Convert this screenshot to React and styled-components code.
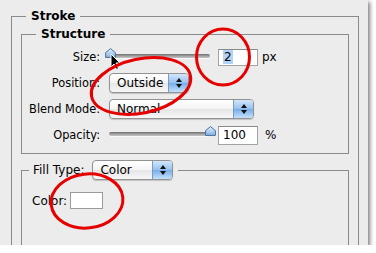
import React from 'react';
import styled, { createGlobalStyle } from 'styled-components';

const Global = createGlobalStyle`
  body {
    margin: 0;
    background: #fff;
    font-family: "DejaVu Sans", Verdana, sans-serif;
    font-size: 12px;
    color: #000;
  }
`;

const Panel = styled.div`
  position: relative;
  width: 368px;
  height: 245px;
  box-sizing: border-box;
  padding: 9px 9px 0 11px;
  background: #ececec;
  box-shadow: 2px 2px 4px rgba(0, 0, 0, 0.5);
  overflow: hidden;
`;

const Group = styled.fieldset`
  margin: ${props => props.mt || 0}px 0 0 0;
  padding: ${props => props.pad};
  border: 1px solid #8a8a8a;
  min-width: 0;
  min-height: ${props => props.minH || 0}px;
`;

const Legend = styled.legend`
  margin-left: ${props => props.ml}px;
  padding: ${props => props.pad || '0 5px'};
  line-height: 14px;
  font-weight: ${props => (props.bold ? 700 : 400)};
  display: flex;
  align-items: center;
  gap: 8px;
`;

const Rows = styled.div`
  display: grid;
  grid-template-columns: 78px 1fr;
  grid-auto-rows: 20px;
  column-gap: 9px;
  row-gap: 6px;
  align-items: center;
`;

const Label = styled.span`
  text-align: right;
  white-space: nowrap;
  font-size: 11.4px;
`;

const Controls = styled.div`
  display: flex;
  align-items: center;
`;

const Track = styled.div`
  position: relative;
  width: 101px;
  height: 4px;
  margin-top: -3px;
  border-radius: 3px;
  background: linear-gradient(#6f6f6f, #a9a9a9 60%, #c4c4c4);
  box-shadow: 0 1px 0 rgba(255, 255, 255, 0.7);
`;

const Thumb = styled.svg`
  position: absolute;
  top: -6px;
  left: ${props => props.at}px;
`;

const Field = styled.div`
  width: 40px;
  height: ${props => props.h}px;
  box-sizing: border-box;
  margin-left: 8px;
  padding-left: 4px;
  display: flex;
  align-items: center;
  background: #fff;
  border: 1px solid #a3a3a3;
  border-top-color: #8a8a8a;
`;

const Selected = styled.span`
  background: #b3d2f7;
  padding: 0 1px;
`;

const Unit = styled.span`
  margin-left: ${props => props.gap}px;
`;

const Select = styled.div`
  width: ${props => props.w}px;
  height: 20px;
  box-sizing: border-box;
  display: flex;
  align-items: center;
  border: 1px solid #929292;
  border-radius: 4px;
  background: linear-gradient(#ffffff, #f4f4f4 48%, #e6e6e6 52%, #f7f7f7);
  box-shadow: 0 1px 1px rgba(0, 0, 0, 0.18);
  overflow: hidden;
  font-weight: 400;
`;

const SelectText = styled.span`
  flex: 1;
  padding-left: 7px;
  white-space: nowrap;
`;

const Stepper = styled.div`
  width: 19px;
  height: 100%;
  display: flex;
  flex-direction: column;
  align-items: center;
  justify-content: center;
  gap: 2px;
  border-left: 1px solid #7b9bc4;
  background: linear-gradient(#d3e6fa, #98c3f0 48%, #78aeea 52%, #c3e1fb);
`;

const Caret = styled.div`
  width: 0;
  height: 0;
  border-left: 3px solid transparent;
  border-right: 3px solid transparent;
  ${props => (props.down ? 'border-top: 4px solid #111;' : 'border-bottom: 4px solid #111;')}
`;

const FillBody = styled.div`
  display: flex;
  align-items: center;
  gap: 3px;
  padding: 12px 0 0 10px;
`;

const Swatch = styled.div`
  width: 33px;
  height: 17px;
  box-sizing: border-box;
  background: #fff;
  border: 1px solid #9a9a9a;
`;

const Overlay = styled.svg`
  position: absolute;
  left: 0;
  top: 0;
  pointer-events: none;
`;

function Dropdown({ w, value }) {
  return (
    <Select w={w}>
      <SelectText>{value}</SelectText>
      <Stepper>
        <Caret />
        <Caret down />
      </Stepper>
    </Select>
  );
}

function Slider({ at }) {
  return (
    <Track>
      <Thumb at={at} width="11" height="10" viewBox="0 0 11 10">
        <defs>
          <linearGradient id={`th${at}`} x1="0" y1="0" x2="0" y2="1">
            <stop offset="0" stopColor="#e4f1fd" />
            <stop offset="1" stopColor="#7fb2e6" />
          </linearGradient>
        </defs>
        <path d="M5.5 0.6 L10.4 4.6 L10.4 9.4 L0.6 9.4 L0.6 4.6 Z" fill={`url(#th${at})`} stroke="#4d6e9a" strokeWidth="1" />
      </Thumb>
    </Track>
  );
}

export default function App() {
  return (
    <>
      <Global />
      <Panel>
        <Group pad="4px 9px 0 9px" minH={260}>
          <Legend bold ml={5}>Stroke</Legend>
          <Group pad="6px 0 8px 0">
            <Legend bold ml={14}>Structure</Legend>
            <Rows>
              <Label>Size:</Label>
              <Controls>
                <Slider at={-4} />
                <Field h={17}><Selected>2</Selected></Field>
                <Unit gap={4}>px</Unit>
              </Controls>
              <Label>Position:</Label>
              <Controls>
                <Dropdown w={80} value="Outside" />
              </Controls>
              <Label>Blend Mode:</Label>
              <Controls>
                <Dropdown w={145} value="Normal" />
              </Controls>
              <Label>Opacity:</Label>
              <Controls>
                <Slider at={96} />
                <Field h={19}>100</Field>
                <Unit gap={7}>%</Unit>
              </Controls>
            </Rows>
          </Group>
          <Group mt={6} pad="0" minH={120}>
            <Legend ml={7} pad="0 5px 0 4px">
              Fill Type:
              <Dropdown w={81} value="Color" />
            </Legend>
            <FillBody>
              Color:
              <Swatch />
            </FillBody>
          </Group>
        </Group>
        <Overlay width="376" height="253" viewBox="0 0 376 253">
          <path d="M111 54 L111 67 L114 64 L116.5 69.5 L118.5 68.5 L116 63 L120 63 Z" fill="#000" stroke="#fff" strokeWidth="1" />
          <ellipse cx="223" cy="57" rx="26.5" ry="28" fill="none" stroke="#e60000" strokeWidth="3" />
          <ellipse cx="141" cy="86" rx="50.5" ry="27" transform="rotate(-12 141 86)" fill="none" stroke="#e60000" strokeWidth="3" />
          <ellipse cx="87" cy="201" rx="36" ry="27" transform="rotate(-6 87 201)" fill="none" stroke="#e60000" strokeWidth="3" />
        </Overlay>
      </Panel>
    </>
  );
}
